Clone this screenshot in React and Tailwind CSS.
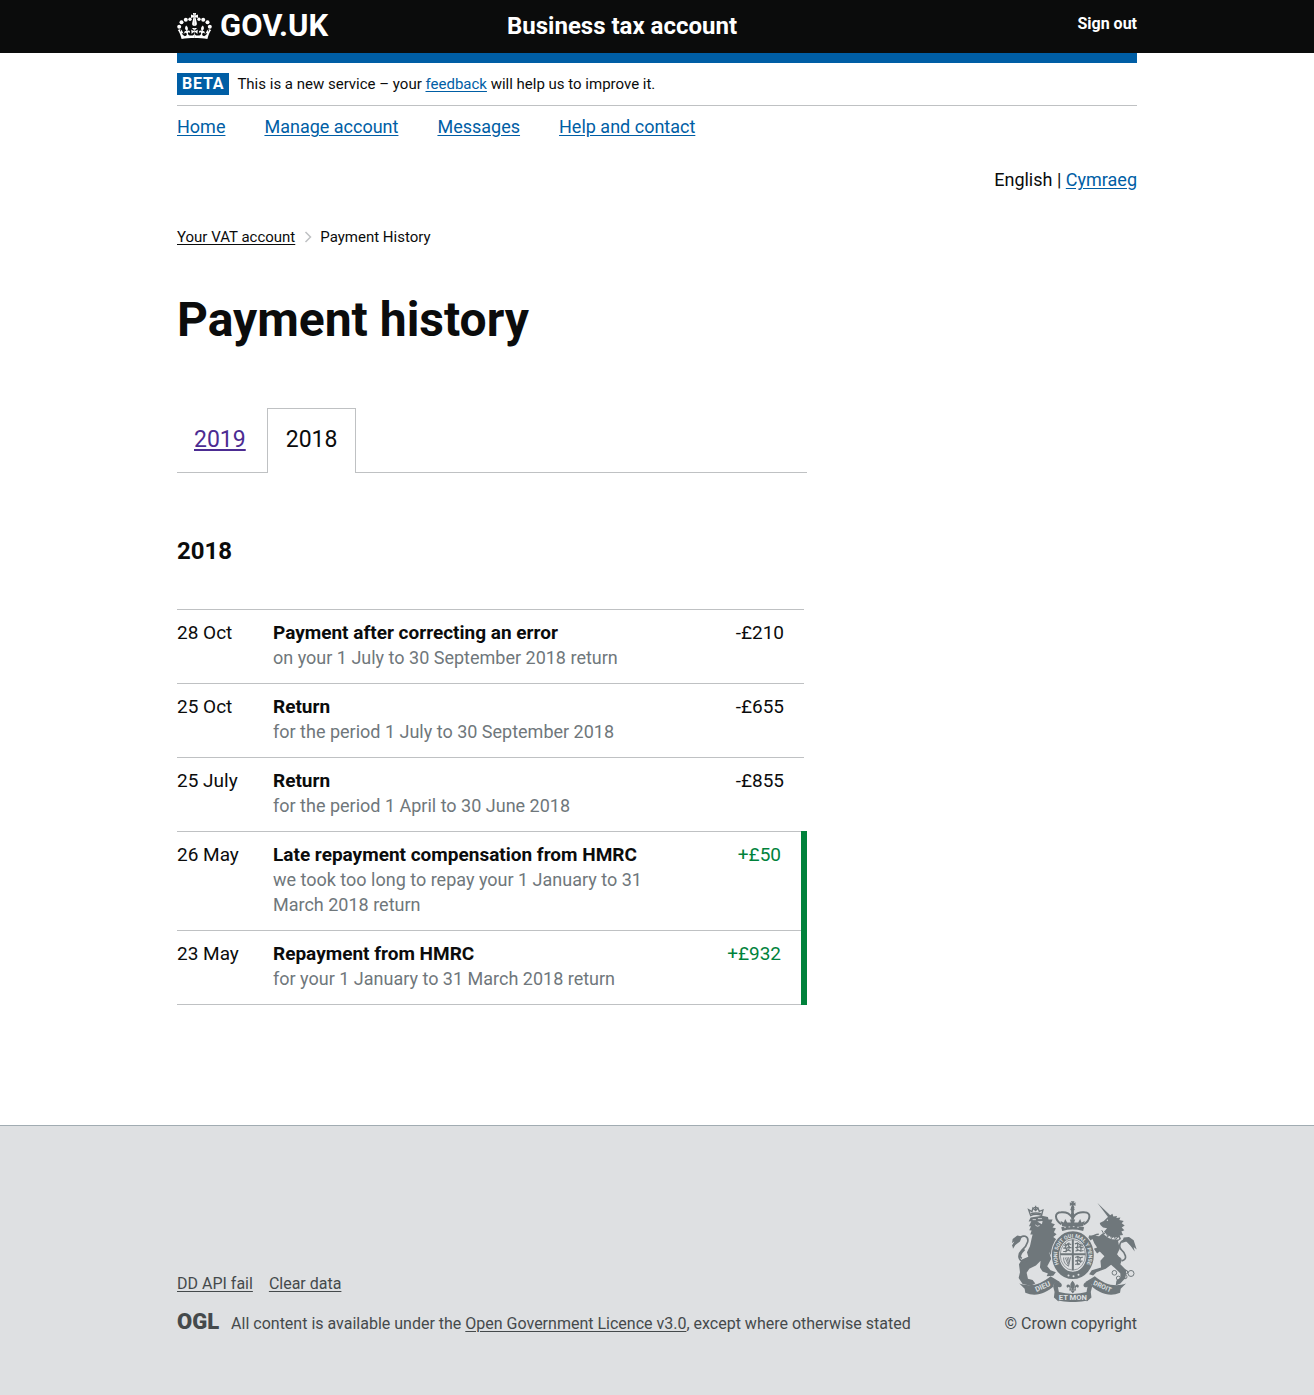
import React from "react";

const link = "text-[#005ea5] underline underline-offset-2";

const entries = [
  { date: "28 Oct", title: "Payment after correcting an error", detail: "on your 1 July to 30 September 2018 return", amount: "-£210" },
  { date: "25 Oct", title: "Return", detail: "for the period 1 July to 30 September 2018", amount: "-£655" },
  { date: "25 July", title: "Return", detail: "for the period 1 April to 30 June 2018", amount: "-£855" },
  { date: "26 May", title: "Late repayment compensation from HMRC", detail: "we took too long to repay your 1 January to 31 March 2018 return", amount: "+£50", credit: true },
  { date: "23 May", title: "Repayment from HMRC", detail: "for your 1 January to 31 March 2018 return", amount: "+£932", credit: true },
];

function CrownHalf() {
  return (
    <>
      <circle cx="2.2" cy="13.7" r="2" />
      <circle cx="4.5" cy="9.2" r="2" />
      <circle cx="8.8" cy="6.8" r="2" />
      <circle cx="13" cy="6.3" r="1.7" />
      <path d="M14.7 14.9s2.4 1.9 2.8 3.1c-1.1 0-2.1-.3-3.3-1.4l.4 4.4c1.2-1.5 2.2-1.8 2.9-1.7-.1 1.5-.2 3.2-2.9 3.3-2 .1-3.5-.7-3.7-1.9-.2-1.3 1.1-2.2 2-.8.7-2.4-1.2-3.2-2.6-1.7 1-2.2 1-3.9-1.2-5.6-1.6 2.1-1.3 3.8.6 5.7-1.3-.7-3.3 0-2.1 2.4.6-1.4 1.9-1.1 2.2.2.2.9-.4 1.9-1.5 2.2-1 .2-2.4-.5-3.6-3 .6 0 1.3.4 2 .9L4.5 16.4c-.3 1.1-.7 1.9-1.1 2.4-.3-.9-.2-1.5 0-2.8l-2.6.9C2.2 18.8 3.5 21.4 4.6 26c3.8-.5 8.2-.9 13-.9V14.9z" />
      <path d="M17.6 0h-1.7l.6 2.5-2.5-.9v3.5l2.5-.9-1.3 5.8c-.5 1.8.6 3 2.4 3z" />
    </>
  );
}

function Crown() {
  return (
    <svg viewBox="0 0 35 26" className="h-[26px] w-[35px]" fill="currentColor" aria-hidden="true">
      <CrownHalf />
      <g transform="translate(35 0) scale(-1 1)"><CrownHalf /></g>
    </svg>
  );
}

function RibbonSide() {
  return (
    <>
      <path d="M58 280C92 292 124 282 152 258L180 276C168 276 160 282 160 290 140 308 108 322 76 308L74 296Z" />
      <path d="M160 290C160 276 176 270 184 280 190 290 180 294 174 290L178 312 176 334 162 322 164 306Z" />
    </>
  );
}

function Arms() {
  return (
    <svg viewBox="36 32 376 305" className="w-[125px]" fill="#6f777b" role="img" aria-label="Royal coat of arms">
      {/* lion */}
      <path d="M92 82 86 94 94 93 87 108 93 108 88 120 95 121 91 133 98 133 95 145 90 168 81 186 85 200 66 208 57 222 60 246 56 264 68 282 92 287 106 280 98 270 84 266 80 248 88 236 108 226 122 212 120 232 128 244 144 250 140 258 160 257 168 246 152 240 142 228 154 206 147 184 162 212 174 214 176 204 166 196 156 176 166 170 176 180 174 162 184 158 170 148 160 140 170 132 162 126 168 114 158 112 165 102 154 98 158 88 146 88 144 80 126 76Z" />
      <path d="M112 94 128 92 126 102Z" fill="#dee0e2" />
      <path d="M98 88h10M114 85h12M106 104l6 4 7-2" stroke="#dee0e2" strokeWidth="2.5" fill="none" />
      <path d="M92 76 86 58 96 64 99 53 107 61 114 53 118 63 129 59 125 75C114 71 102 71 92 76Z" fill="none" stroke="#6f777b" strokeWidth="4" />
      <path d="M107 46v14M101 52h12M92 71q16-6 33 0" stroke="#6f777b" strokeWidth="4" fill="none" />
      <path d="M82 212C56 220 50 196 66 180 84 164 90 144 76 138 62 134 54 150 38 168M66 204C54 200 66 186 74 178" fill="none" stroke="#6f777b" strokeWidth="5" />
      <path d="M38 146 52 136 66 139 60 154 46 164 39 176 37 164 43 154 36 158Z" />

      {/* unicorn */}
      <path d="M293 38 333 76 326 82Z" />
      <path d="M326 79 338 70 341 79 352 77 350 83 362 82 359 89 372 92 366 99 375 106 366 112 374 120 365 124 370 134 360 136 364 146 355 152 360 176 352 192 366 210 362 222 380 240 377 264 362 280 348 286 350 272 362 262 362 250 346 234 334 224 318 236 290 246 280 256 268 252 276 240 304 232 302 212 314 198 300 184 292 190 282 176 292 172 284 160 278 146 264 156 266 142 278 136 298 138 308 130 322 114 310 112 302 104 300 98 312 92Z" />
      <path d="M308 124C322 140 340 148 358 144" stroke="#dee0e2" strokeWidth="6" fill="none" />
      <path d="M306 120l7 12 6-8 5 16 7-10 4 15 8-9 4 12 10-9" stroke="#6f777b" strokeWidth="3" fill="none" />
      <circle cx="323" cy="90" r="2" fill="#dee0e2" />
      <path d="M297 132C284 132 282 140 270 138L266 150M366 212C386 208 376 188 366 180 354 168 362 150 376 150 390 150 390 164 400 168" fill="none" stroke="#6f777b" strokeWidth="5" />
      <path d="M372 142 388 140 402 150 411 178 402 170 405 184 392 166 380 154 366 158Z" />
      <g fill="none" stroke="#6f777b" strokeWidth="3">
        <circle cx="358" cy="208" r="6" /><circle cx="344" cy="248" r="7" /><circle cx="356" cy="264" r="6" />
        <circle cx="378" cy="246" r="6" /><circle cx="376" cy="260" r="6" /><circle cx="394" cy="250" r="9" />
      </g>

      {/* crown */}
      <path d="M213 33h11l-3 6 6-3v11l-6-3 3 9h-11l3-9-6 3V36l6 3Z" />
      <circle cx="218" cy="57" r="6" />
      <path d="M184 102C164 88 162 66 184 66 202 64 212 74 216 80L218 62 221 80C226 70 240 64 254 66 276 66 272 90 252 102" fill="none" stroke="#6f777b" strokeWidth="6" />
      <path d="M218 62v38" stroke="#6f777b" strokeWidth="7" strokeDasharray="4 1" />
      <path d="M182 92 192 97 196 86 202 97 213 97 210 88H226L223 97 235 97 241 86 245 97 255 92 250 108H187Z" />
      <path d="M184 111Q218 101 253 111L250 122Q218 113 187 122Z" />
      <path d="M193 112h5m8-2h5m8-1h5m8 2h5" stroke="#dee0e2" strokeWidth="2.5" />

      {/* garter and shield */}
      <ellipse cx="219" cy="195" rx="66" ry="75" fill="#dee0e2" />
      <ellipse cx="219" cy="195" rx="52" ry="61" fill="none" stroke="#6f777b" strokeWidth="22" />
      <path id="garter" d="M184 234A47 55 0 1 1 254 234" fill="none" />
      <text fill="#dee0e2" fontFamily="Roboto" fontWeight="700" fontSize="16"><textPath href="#garter" startOffset="50%" textAnchor="middle">HONI SOIT QUI MAL Y PENSE</textPath></text>
      <g fill="#dee0e2"><circle cx="206" cy="256" r="3" /><circle cx="221" cy="258" r="3" /><circle cx="236" cy="254" r="3" /></g>
      <ellipse cx="219" cy="194" rx="40" ry="49" fill="#dee0e2" />
      <g fill="none" stroke="#6f777b">
        <ellipse cx="219" cy="194" rx="38" ry="46" strokeWidth="2" />
        <path d="M219 148v92M181 192h76" strokeWidth="6" />
        <path d="M192 165h8l4-5 10 3M190 174h12l4-4 9 3M190 184h9l5-5 9 4M196 160l3 6-3 6 4 6-3 8M208 157l-3 8 4 5-3 10" strokeWidth="3.5" />
        <path d="M225 161l8-3 8 6 8 1M226 172h8l6-3 9 4M227 183l8-4 7 4 9-2M232 158l2 8-3 7 3 10M243 162l-3 8 4 5-2 9" strokeWidth="3.5" />
        <path d="M226 202l8-3 7 4 8-2M226 213l8-3 7 4 7-2M226 223l8-3 7 2M233 199l2 8-3 7 3 11M243 202l-3 8 3 8" strokeWidth="3.5" />
        <path d="M191 202c0 14 6 22 15 26l6-27M196 202l9 22M201 201l6 20M206 201l3 14" strokeWidth="2.5" />
      </g>

      {/* motto ribbon */}
      <RibbonSide />
      <g transform="translate(437 0) scale(-1 1)"><RibbonSide /></g>
      <path d="M174 305Q219 318 264 305L264 331Q219 341 174 331Z" />
      <path d="M218 272C206 284 214 290 216 300H221C223 290 231 284 218 272ZM213 298C214 282 202 280 200 288 201 296 206 292 207 290 210 292 210 296 208 301H229C227 296 227 292 230 290 231 292 236 296 237 288 235 280 223 282 224 298ZM212 302h13l-6 8Z" />
      <g fill="#dee0e2" fontFamily="Roboto" fontWeight="700" textAnchor="middle">
        <text fontSize="23" x="219" y="331">ET MON</text>
        <text fontSize="22" transform="translate(131 296) rotate(-24)">DIEU</text>
        <text fontSize="20" transform="translate(305 295) rotate(24)">DROIT</text>
      </g>
    </svg>
  );
}

export default function App() {
  return (
    <div className="bg-white font-['Roboto',sans-serif] text-[#0b0c0c]">
      <header className="bg-[#0b0c0c] px-4 text-white">
        <div className="mx-auto flex h-[53px] max-w-[960px] items-start">
          <div className="w-[330px] pt-3">
            <a href="#home" className="flex items-center gap-2">
              <Crown />
              <span className="text-[31px] leading-[28px] font-bold">GOV.UK</span>
            </a>
          </div>
          <a href="#account" className="pt-3 text-2xl leading-[28px] font-bold">Business tax account</a>
          <a href="#signout" className="ml-auto pt-3 text-base leading-[23px] font-bold">Sign out</a>
        </div>
      </header>

      <div className="px-4">
        <div className="mx-auto max-w-[960px]">
          <div className="flex items-center gap-2 border-t-10 border-b border-t-[#005ea5] border-b-[#bfc1c3] py-[10px] text-[15px] leading-[22px]">
            <strong className="bg-[#005ea5] px-[5px] text-base leading-[22px] font-bold tracking-wider text-white">BETA</strong>
            <p>This is a new service – your <a href="#feedback" className={link}>feedback</a> will help us to improve it.</p>
          </div>

          <nav aria-label="Account" className="flex gap-[39px] pt-2 text-lg leading-[25px]">
            <a href="#home" className={link}>Home</a>
            <a href="#manage" className={link}>Manage account</a>
            <a href="#messages" className={link}>Messages</a>
            <a href="#help" className={link}>Help and contact</a>
          </nav>

          <p className="mt-7 text-right text-lg leading-[25px]">English | <a href="#cymraeg" className={link}>Cymraeg</a></p>

          <nav aria-label="Breadcrumb" className="mt-[35px] flex items-center text-[15px] leading-5">
            <a href="#vat" className="underline underline-offset-2">Your VAT account</a>
            <svg viewBox="0 0 8 12" className="mr-2 ml-[9px] h-3 w-2" fill="none" stroke="#bfc1c3" strokeWidth="1.5" aria-hidden="true"><path d="M1.5 1 6.5 6l-5 5" /></svg>
            <span>Payment History</span>
          </nav>

          <main className="w-full max-w-[630px]">
            <h1 className="mt-12 text-5xl leading-[50px] font-bold">Payment history</h1>

            <nav aria-label="Year" className="mt-[63px] flex border-b border-[#bfc1c3] text-[23px] leading-[30px]">
              <a href="#2019" className="mr-1 px-[17px] py-[17px] text-[#4c2c92] underline decoration-2 underline-offset-2">2019</a>
              <span className="-mb-px border border-b-0 border-[#bfc1c3] bg-white px-[18px] pt-4 pb-[18px]">2018</span>
            </nav>

            <h2 className="mt-[63px] text-2xl leading-[30px] font-bold">2018</h2>

            <table className="mt-[43px] w-full border-collapse text-lg leading-[25px]">
              <tbody>
                {entries.map((e) => (
                  <tr key={e.date} className="border-y border-[#bfc1c3] align-top">
                    <td className="w-24 pt-[10px] pb-[13px] text-[19px]">{e.date}</td>
                    <td className="pt-[10px] pb-[13px]">
                      <strong className="block text-[19px] font-bold">{e.title}</strong>
                      <span className="text-[#6f777b]">{e.detail}</span>
                    </td>
                    <td className={e.credit
                      ? "w-[140px] border-r-6 border-r-[#00823b] pt-[10px] pr-5 pb-[13px] text-right text-[19px] text-[#00823b]"
                      : "w-[140px] pt-[10px] pr-5 pb-[13px] text-right text-[19px]"}>{e.amount}</td>
                  </tr>
                ))}
              </tbody>
            </table>
          </main>
        </div>
      </div>

      <footer className="mt-[120px] border-t border-[#a1acb2] bg-[#dee0e2] px-4 pt-[75px] pb-[61px] text-[#454a4c]">
        <div className="mx-auto flex max-w-[960px] items-end justify-between text-base leading-5">
          <div>
            <div className="flex gap-4">
              <a href="#ddapi" className="underline underline-offset-2">DD API fail</a>
              <a href="#clear" className="underline underline-offset-2">Clear data</a>
            </div>
            <div className="mt-5 flex items-center gap-3">
              <span className="pb-1 text-[22px] leading-4 font-black">OGL</span>
              <p>All content is available under the <a href="#ogl" className="underline underline-offset-2">Open Government Licence v3.0</a>, except where otherwise stated</p>
            </div>
          </div>
          <a href="#crown" className="flex flex-col items-end gap-3">
            <Arms />
            <span>© Crown copyright</span>
          </a>
        </div>
      </footer>
    </div>
  );
}
